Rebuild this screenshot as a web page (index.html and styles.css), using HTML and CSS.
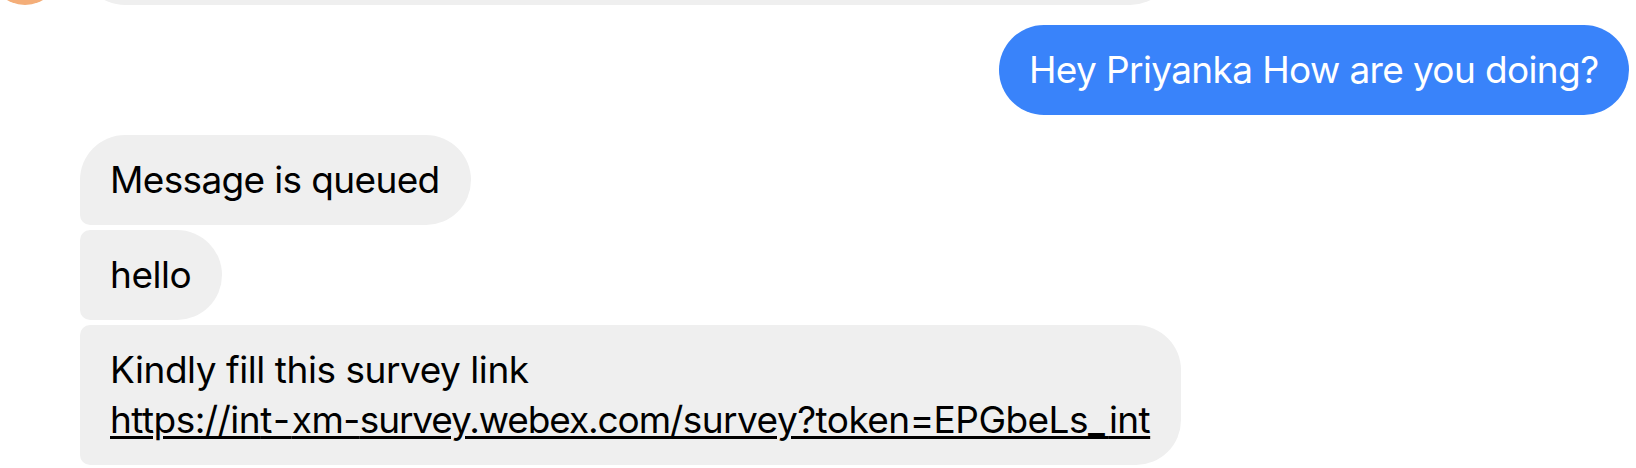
FILE: index.html
```html
<!DOCTYPE html>
<html lang="en">
<head>
<meta charset="utf-8">
<title>Chat</title>
<link rel="stylesheet" href="styles.css">
</head>
<body>
<main class="chat">
  <div class="previous"><span class="avatar"></span><span class="bubble tail"></span></div>
  <div class="bubble outgoing"><span class="t1">Hey Priyanka How are you doing?</span></div>
  <div class="bubble incoming first"><span class="t2">Message is queued</span></div>
  <div class="bubble incoming second"><span class="t3">hello</span></div>
  <div class="bubble incoming third"><span class="t4">Kindly fill this survey link</span><a class="t5">https://in<i class="wide">t-</i>xm-<i class="tight">survey.webex.com</i>/survey?token=EPGbeLs<i class="under">_</i>int</a></div>
</main>
</body>
</html>
```
FILE: styles.css
```css
* { box-sizing: border-box; }
body { margin: 0; background: #fff; overflow: hidden; }
.chat {
  display: flex;
  flex-direction: column;
  align-items: flex-start;
  width: 1636px;
  height: 468px;
  overflow: hidden;
  font: 37px/50px Inter, sans-serif;
  color: #000;
}
.previous { display: flex; align-items: flex-end; height: 5px; flex: none; }
.avatar { width: 70px; height: 70px; margin-left: -10px; border-radius: 50%; background: #f4ae79; }
.tail { width: 1095px; height: 90px; margin-left: 20px; border-radius: 10px 45px 45px 45px; background: #efefef; }
.bubble { flex: none; white-space: nowrap; }
.bubble span, .bubble a { display: block; width: max-content; }
.outgoing {
  align-self: flex-end;
  width: 630px;
  height: 90px;
  margin: 20px 7px 20px 0;
  padding: 20px 30px;
  border-radius: 45px;
  background: #3983fa;
  color: #fff;
}
.incoming {
  height: 90px;
  margin: 0 0 5px 80px;
  padding: 20px 30px;
  background: #efefef;
}
.first { width: 391px; border-radius: 45px 45px 45px 10px; }
.second { width: 142px; border-radius: 10px 45px 45px 10px; }
.third { width: 1101px; height: 140px; border-radius: 10px 45px 45px 10px; }
.t1 { letter-spacing: -0.63px; }
.t2 { letter-spacing: -0.65px; }
.t3 { letter-spacing: -0.45px; }
.t4 { letter-spacing: -0.45px; }
.t5 {
  letter-spacing: -0.54px;
  text-decoration: underline;
  text-decoration-thickness: 3px;
  text-underline-offset: 3px;
}
.t5 i { font-style: normal; }
.wide { letter-spacing: 1.6px; }
.tight { letter-spacing: -1.1px; }
.under { letter-spacing: 4px; text-decoration-skip-ink: none; }
```
